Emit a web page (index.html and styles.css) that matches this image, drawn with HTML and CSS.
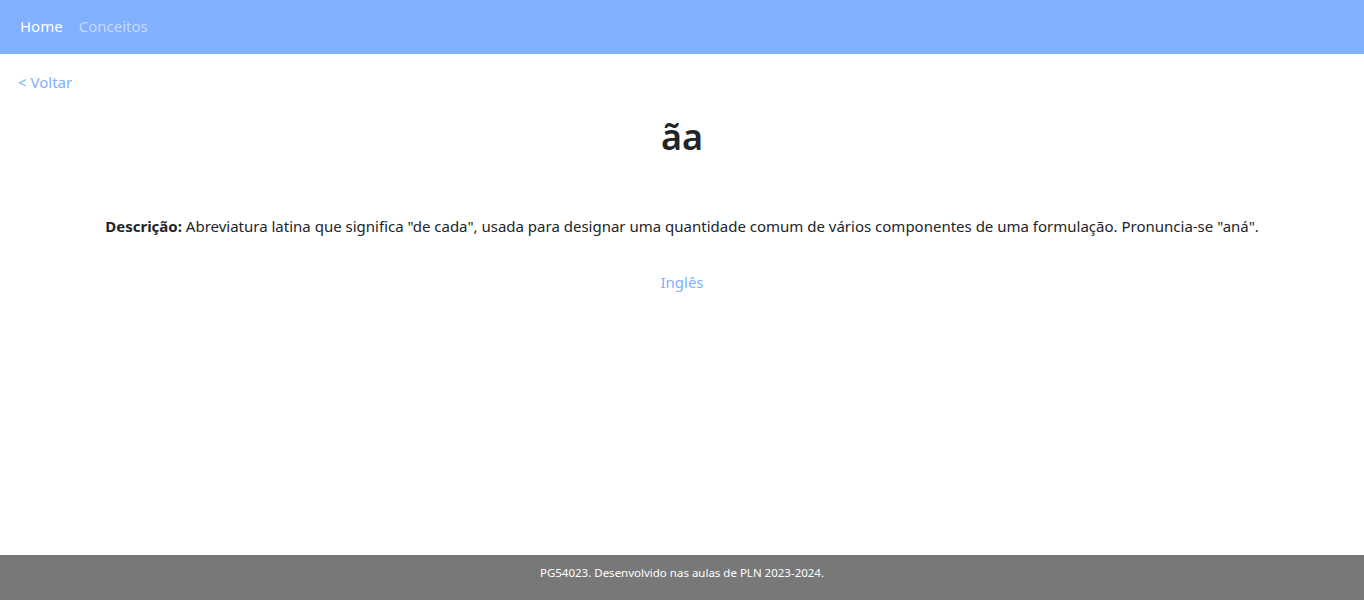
FILE: index.html
```html
<!DOCTYPE html>
<html lang="pt">
<head>
<meta charset="utf-8">
<title>ãa</title>
<link rel="stylesheet" href="styles.css">
</head>
<body>
<div class="page">
  <nav class="navbar">
    <a class="nav-link active" href="#">Home</a>
    <a class="nav-link" href="#">Conceitos</a>
  </nav>
  <main class="content">
    <a class="back" href="#">&lt; Voltar</a>
    <h1 class="title">ãa</h1>
    <p class="desc"><b>Descrição:</b> Abreviatura latina que significa "de cada", usada para designar uma quantidade comum de vários componentes de uma formulação. Pronuncia-se "aná".</p>
    <a class="lang" href="#">Inglês</a>
  </main>
  <footer class="footer">PG54023. Desenvolvido nas aulas de PLN 2023-2024.</footer>
</div>
</body>
</html>
```
FILE: styles.css
```css
html, body {
  margin: 0;
  padding: 0;
  height: 100%;
}
body {
  font-family: "Noto Sans", "Open Sans", sans-serif;
  font-size: 15px;
  color: #212529;
  background: #fff;
}
a { text-decoration: none; }
.page {
  display: flex;
  flex-direction: column;
  min-height: 600px;
}
.navbar {
  background: #80b0ff;
  height: 54px;
  display: flex;
  align-items: center;
  padding: 0 12px 2px;
  box-sizing: border-box;
}
.nav-link {
  color: rgba(255,255,255,0.55);
  padding: 0 8px;
  font-size: 15px;
}
.nav-link.active { color: #fff; }
.content {
  flex: 1;
  display: flex;
  flex-direction: column;
  align-items: center;
  padding: 17px 18px 0;
}
.back {
  align-self: flex-start;
  color: #80b0ff;
  line-height: 22px;
}
.title {
  margin: 22px 0 0;
  font-size: 36px;
  font-weight: 600;
  line-height: 44px;
}
.desc {
  margin: 56px 0 0;
  line-height: 22px;
  text-align: center;
}
.lang {
  margin-top: 34px;
  color: #80b0ff;
  line-height: 22px;
}
.footer {
  height: 45px;
  box-sizing: border-box;
  padding-top: 10px;
  background: #787878;
  color: #fff;
  font-size: 11.5px;
  line-height: 16px;
  text-align: center;
}
```
